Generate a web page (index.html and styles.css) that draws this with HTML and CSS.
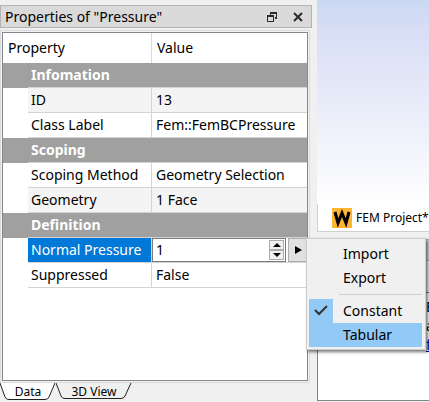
FILE: index.html
```html
<!DOCTYPE html>
<html lang="en">
<head>
<meta charset="utf-8">
<title>Properties</title>
<link rel="stylesheet" href="styles.css">
</head>
<body>
<div class="app">
  <aside class="dock">
    <header class="titlebar">
      <h1>Properties of "Pressure"</h1>
      <button class="tool" aria-label="Float"><svg width="10" height="10" viewBox="0 0 10 10"><path d="M3 0H10V7H8V5H9V2H4V3H3ZM0 3H7V10H0ZM1 5V9H6V5Z" fill="#2b2b2b" fill-rule="evenodd"/></svg></button>
      <button class="tool" aria-label="Close"><svg width="10" height="10" viewBox="0 0 10 10"><path d="M1 1L9 9M9 1L1 9" stroke="#2b2b2b" stroke-width="2"/></svg></button>
    </header>
    <div class="frame">
      <div class="sheet">
        <table>
          <colgroup><col class="col-gutter"><col class="col-name"><col></colgroup>
          <thead><tr><th colspan="2" class="prop">Property</th><th class="value">Value</th></tr></thead>
          <tbody>
            <tr class="group"><td class="gutter"></td><th colspan="2">Infomation</th></tr>
            <tr class="alt"><td class="gutter"></td><th>ID</th><td>13</td></tr>
            <tr><td class="gutter"></td><th>Class Label</th><td>Fem::FemBCPressure</td></tr>
            <tr class="group"><td class="gutter"></td><th colspan="2">Scoping</th></tr>
            <tr><td class="gutter"></td><th>Scoping Method</th><td>Geometry Selection</td></tr>
            <tr class="alt"><td class="gutter"></td><th>Geometry</th><td>1 Face</td></tr>
            <tr class="group"><td class="gutter"></td><th colspan="2">Definition</th></tr>
            <tr class="selected"><td class="gutter"></td><th><label for="pressure">Normal Pressure</label></th><td class="edit">
              <div class="editor">
                <div class="spin">
                  <input id="pressure" type="text" value="1">
                  <div class="steps">
                    <button aria-label="Increase"><svg width="8" height="4" viewBox="0 0 8 4"><path d="M0 4L4 0L8 4Z"/></svg></button>
                    <button aria-label="Decrease"><svg width="8" height="4" viewBox="0 0 8 4"><path d="M0 0L4 4L8 0Z"/></svg></button>
                  </div>
                </div>
                <button class="more" aria-label="Options"><svg width="8" height="8" viewBox="0 0 8 8"><path d="M1 0L8 4L1 8Z"/></svg></button>
              </div></td></tr>
            <tr><td class="gutter"></td><th>Suppressed</th><td>False</td></tr>
          </tbody>
        </table>
      </div>
    </div>
    <nav class="tabs">
      <button class="tab active"><svg width="56" height="18" viewBox="0 0 56 18"><path d="M0 0L5 14Q6 16.500 9 16.500H45Q48 16.500 49 14L55 0"/></svg><span>Data</span></button>
      <button class="tab"><svg width="76" height="18" viewBox="0 0 76 18"><path d="M0 0L5 13Q6 15.500 9 15.500H65Q68 15.500 69 13L75 0"/></svg><span>3D View</span></button>
    </nav>
  </aside>
  <main class="work">
    <div class="canvas"></div>
    <div class="doc">
      <svg width="20" height="20" viewBox="0 0 20 20"><rect width="20" height="20" fill="#ffb432"/><path d="M3 4L6 15L10 5L14 15L17 4" fill="none" stroke="#000" stroke-width="3"/></svg>
      <span>FEM Project*</span>
    </div>
    <div class="lower"></div>
    <div class="report">
      <p>B</p>
      <p>a</p>
      <p><a href="#">f</a></p>
    </div>
  </main>
</div>
<div class="menu" role="menu">
  <button role="menuitem">Import</button>
  <button role="menuitem">Export</button>
  <hr>
  <button role="menuitem" class="checked"><svg width="14" height="12" viewBox="0 0 14 12"><path d="M1 5L5 9L13 1" fill="none" stroke="#333" stroke-width="2"/></svg>Constant</button>
  <button role="menuitem" class="hover">Tabular</button>
</div>
</body>
</html>
```
FILE: styles.css
```css
* { box-sizing: border-box; }
body { margin: 0; background: #f0f0f0; color: #000; font: 14px/24px "Noto Sans", "Open Sans", sans-serif; overflow: hidden; }
button { font: inherit; color: inherit; border: 0; padding: 0; margin: 0; background: none; }
svg { display: block; flex: none; }
.app { display: flex; height: 100vh; }
.dock { flex: 0 0 317px; display: flex; flex-direction: column; padding-top: 5px; }
.titlebar { display: flex; align-items: center; height: 23px; margin-right: 5px; padding: 0 8px 0 4px; border: 1px solid #b4b4b4; background: #dadada; gap: 16px; }
.titlebar h1 { flex: 1; margin: 0; font-size: 14px; font-weight: 400; line-height: 20px; white-space: nowrap; }
.frame { flex: 1; margin: 2px 7px 0 0; padding: 1px; border: 1px solid #dcdcdc; display: flex; }
.sheet { flex: 1; border: 1px solid #828790; background: #fff; }
table { width: 100%; table-layout: fixed; border-collapse: separate; border-spacing: 0; }
.col-gutter { width: 25px; }
.col-name { width: 124px; }
th, td { height: 25px; padding: 0 4px; text-align: left; font-weight: 400; white-space: nowrap; line-height: 24px; }
thead th { height: 30px; }
thead .prop { padding-left: 5px; border-right: 1px solid #d9d9d9; }
thead .value { padding-left: 5px; }
tbody th, tbody td { border-bottom: 1px solid #d4d4d4; }
tbody th { border-right: 1px solid #d4d4d4; padding: 0 0 0 3px; }
tbody .gutter { border-bottom: 0; padding: 0; background: #fff; }
.alt { background: #f4f4f4; }
.group th, .group .gutter { background: #a0a0a0; color: #fff; font-weight: 700; border-right: 0; }
.selected th { background: #0078d7; color: #fff; }
.selected label { display: block; }
.edit { padding: 0; }
.editor { display: flex; height: 24px; gap: 2px; }
.spin { flex: 1; min-width: 0; display: flex; border: 1px solid #7a7a7a; background: #fff; padding: 1px; }
.spin input { flex: 1; min-width: 0; border: 0; outline: 0; padding: 0 2px; font: inherit; }
.steps { display: flex; flex-direction: column; width: 15px; }
.steps button { flex: 1; display: grid; place-items: center; background: #f0f0f0; border: 1px solid #acacac; }
.more { width: 19px; display: grid; place-items: center; background: #e1e1e1; border: 1px solid #adadad; }
.tabs { display: flex; height: 19px; font-size: 12px; }
.tab { display: grid; height: 18px; line-height: 18px; }
.tab svg, .tab span { grid-area: 1 / 1; }
.tab path { fill: #f0f0f0; stroke: #222; }
.tab.active path { fill: #fff; }
.work { flex: 1; min-width: 0; display: flex; flex-direction: column; }
.canvas { height: 204px; background: linear-gradient(#ccd8f3, #d8def5 16%, #fff); }
.doc { display: flex; align-items: center; gap: 4px; height: 28px; padding-left: 14px; background: #fff; border: 1px solid #d0d0d0; border-width: 0 0 1px 1px; font-size: 12px; white-space: nowrap; }
.lower { height: 22px; margin: 7px 0 31px; background: #dadada; border: 1px solid #b4b4b4; border-right: 0; }
.report { flex: 1; margin-bottom: 1px; padding: 4px 0 0 108px; background: #fff; border: 1px solid #828282; border-right: 0; overflow: hidden; }
.report p { margin: 0; line-height: 19px; }
.report a { color: #00c; }
.menu { position: absolute; left: 306px; top: 238px; width: 120px; padding: 3px 3px 2px 2px; border: 1px solid #ccc; background: #f0f0f0; box-shadow: 2px 2px 3px #0008; }
.menu button { display: block; position: relative; width: 100%; height: 24px; padding-left: 34px; text-align: left; }
.menu hr { margin: 4px 0 4px 30px; border: 0; border-top: 1px solid #d0d0d0; }
.menu .hover { background: #91c9f7; }
.menu .checked svg { position: absolute; left: 0; top: 0; width: 24px; height: 24px; padding: 6px 5px; background: #91c9f7; }
```
